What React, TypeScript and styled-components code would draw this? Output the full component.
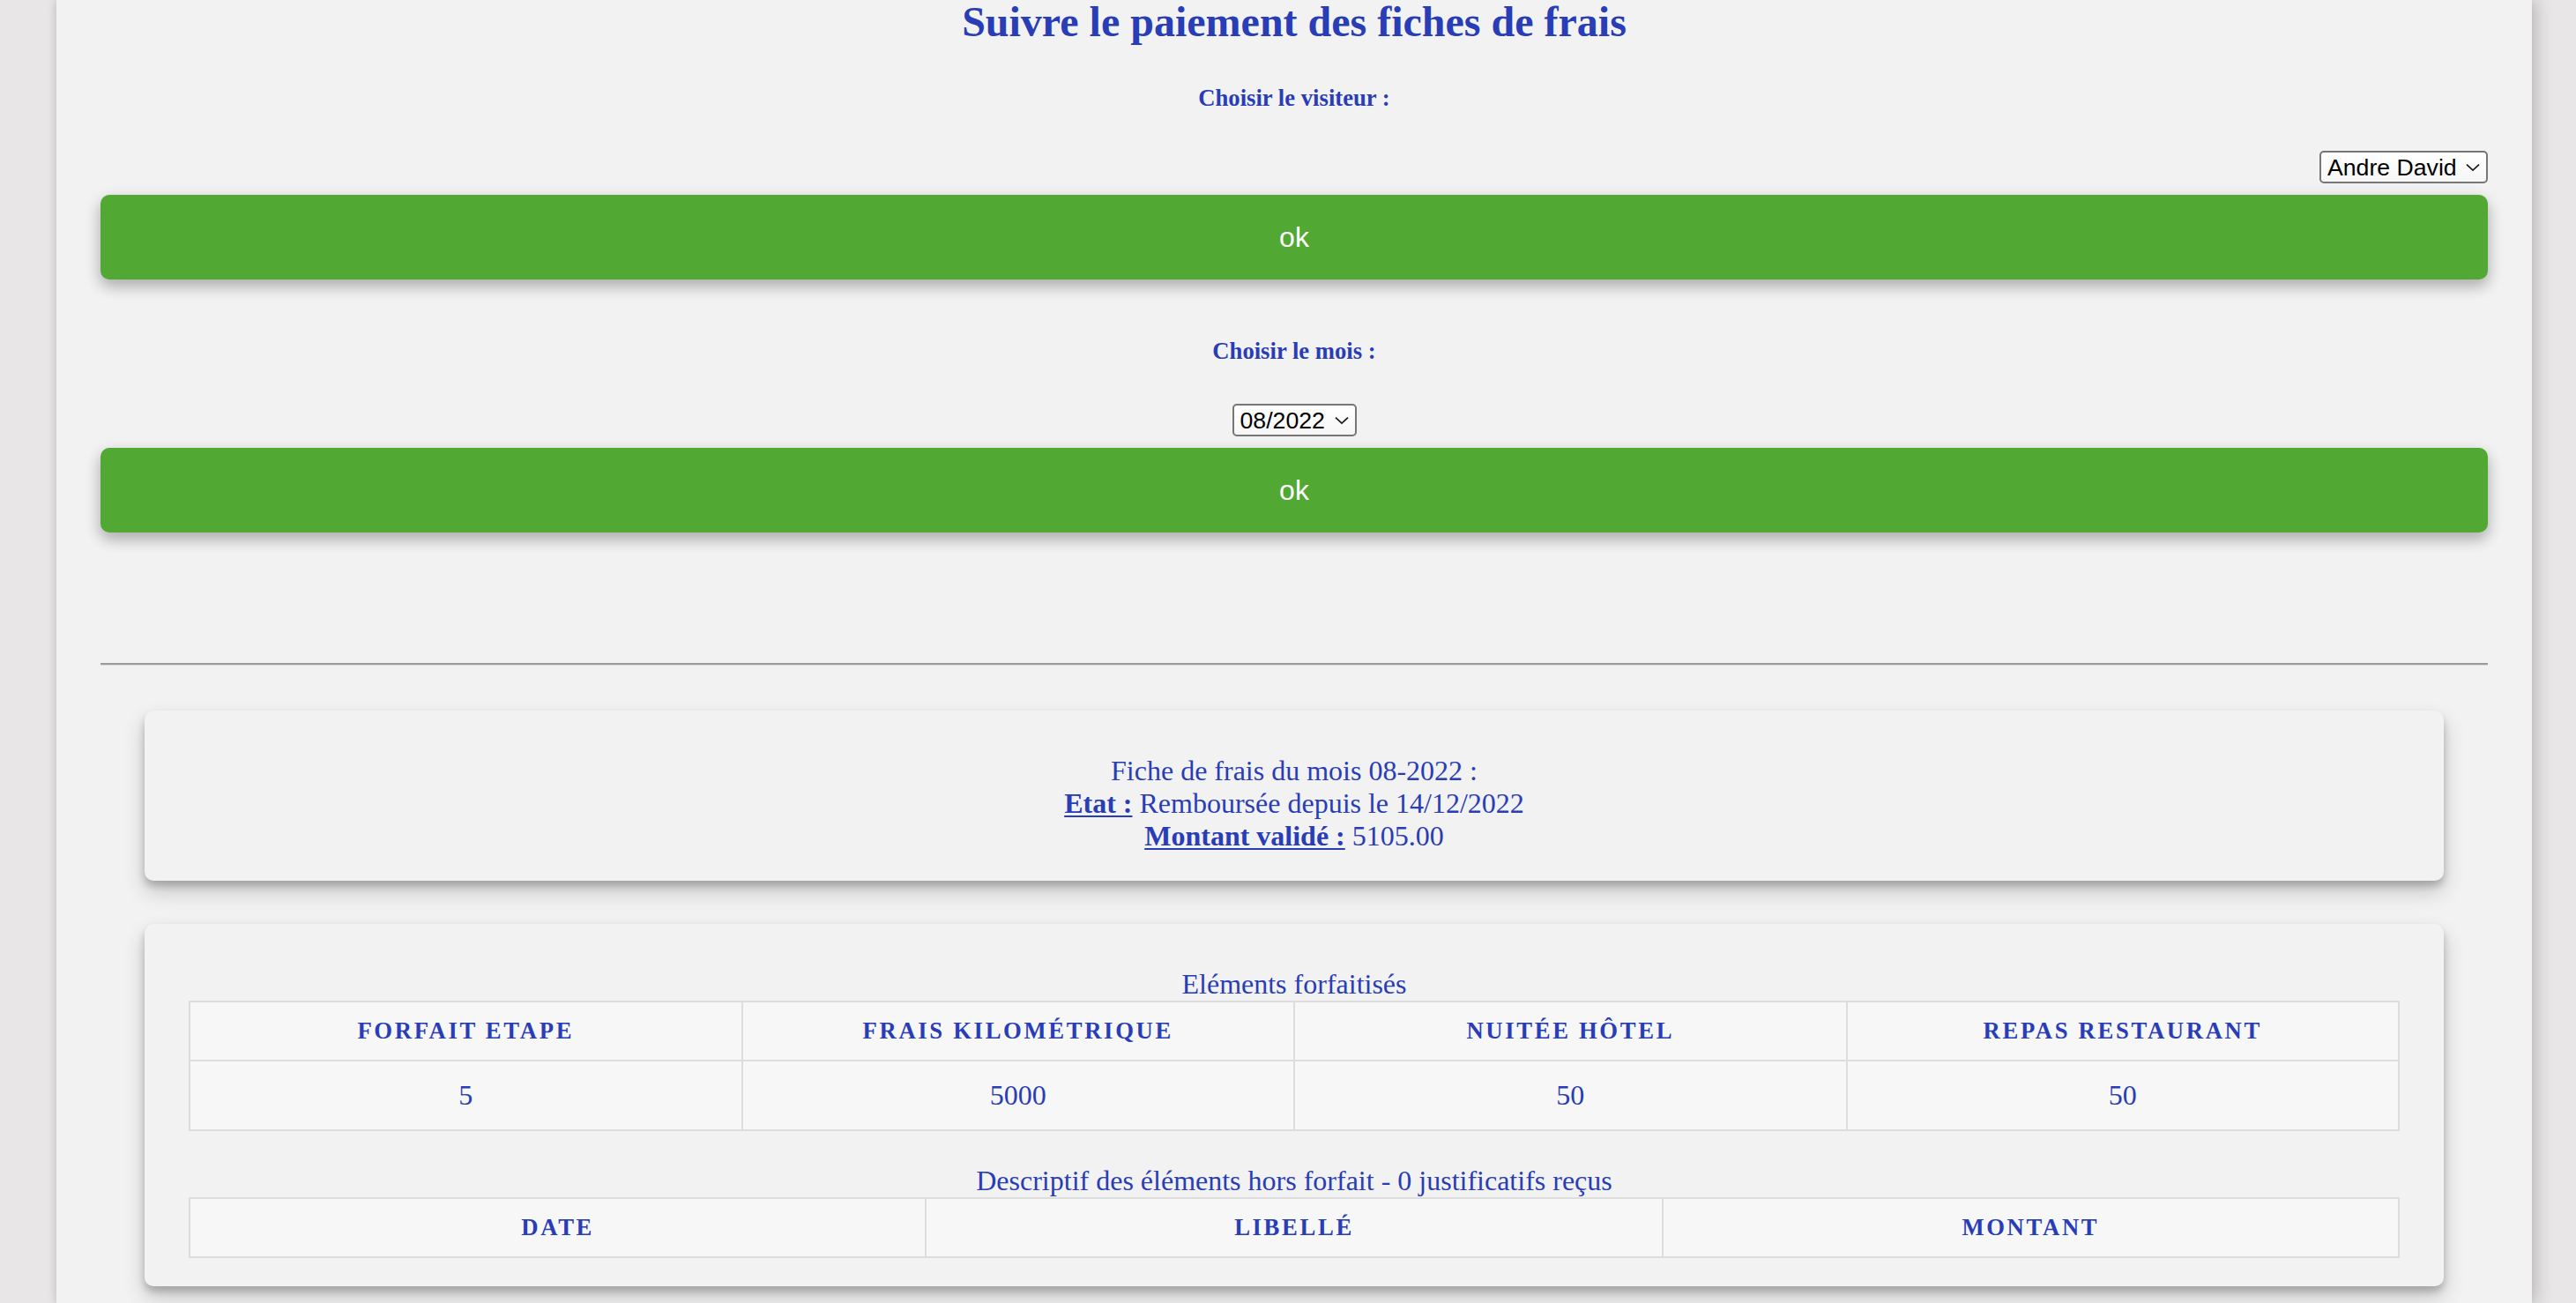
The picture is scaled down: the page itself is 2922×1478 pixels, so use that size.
import React from 'react';
import styled, { createGlobalStyle } from 'styled-components';

const GlobalStyle = createGlobalStyle`
  html, body {
    margin: 0;
    padding: 0;
    background: #e8e6e7;
    overflow: hidden;
  }
  body {
    font-family: "Liberation Serif", "Times New Roman", serif;
  }
`;

const Page = styled.div`
  min-height: 100vh;
  background: #e8e6e7;
  display: flex;
  padding-left: 64px;
  box-sizing: border-box;
`;

const Main = styled.main`
  width: 2808px;
  min-height: 1478px;
  box-sizing: border-box;
  padding: 0 50px 20px;
  background: #f2f2f2;
  color: #293db6;
  box-shadow: 6px 0 18px rgba(0, 0, 0, 0.18), -2px 0 8px rgba(0, 0, 0, 0.08);
`;

const Title = styled.h1`
  margin: -3px 0 0;
  font-size: 48px;
  line-height: 55px;
  font-weight: bold;
  text-align: center;
`;

const Label = styled.label<{ $gap: number }>`
  display: block;
  margin-top: ${p => p.$gap}px;
  font-size: 26.67px;
  line-height: 31px;
  font-weight: bold;
  text-align: center;
`;

const SelectRow = styled.div<{ $align: 'flex-end' | 'center' }>`
  display: flex;
  justify-content: ${p => p.$align};
  margin-top: 44px;
`;

const SelectWrap = styled.span`
  position: relative;
  display: inline-flex;
`;

const Select = styled.select`
  appearance: none;
  -webkit-appearance: none;
  height: 37px;
  box-sizing: border-box;
  margin: 0;
  border: 2px solid #767676;
  border-radius: 5px;
  background: linear-gradient(#ffffff, #f6f6f6);
  font-family: "Liberation Sans", Arial, sans-serif;
  font-size: 26.67px;
  color: #000;
  padding: 0 33px 0 7px;
  outline: none;
`;

const Chevron = styled.svg`
  position: absolute;
  right: 9px;
  top: 50%;
  width: 16px;
  height: 9px;
  transform: translateY(-50%);
  pointer-events: none;
`;

const OkButton = styled.button`
  display: block;
  width: 100%;
  height: 96px;
  margin-top: 13px;
  border: none;
  border-radius: 10px;
  background: #51a832;
  color: #ffffff;
  font-family: "Liberation Sans", Arial, sans-serif;
  font-size: 32px;
  cursor: pointer;
  box-shadow: 0 8px 16px 0 rgba(0, 0, 0, 0.2), 0 6px 20px 0 rgba(0, 0, 0, 0.12);
`;

const Rule = styled.hr`
  margin: 148px 0 0;
  height: 0;
  border: none;
  border-top: 2px solid #9b9b9b;
  border-bottom: 1px solid #dcdcdc;
`;

const Card = styled.section<{ $gap: number }>`
  margin: ${p => p.$gap}px 50px 0;
  padding: 50px 50px 32px;
  background: #f2f2f2;
  border-radius: 10px;
  box-shadow: 0 12px 24px rgba(0, 0, 0, 0.19), 0 6px 8px rgba(0, 0, 0, 0.2);
`;

const Summary = styled.div`
  font-size: 32px;
  line-height: 37px;
  text-align: center;
`;

const Key = styled.strong`
  text-decoration: underline;
  text-decoration-thickness: 2px;
  text-underline-offset: 3px;
`;

const Caption = styled.div<{ $gap: number }>`
  margin-top: ${p => p.$gap}px;
  font-size: 32px;
  line-height: 37px;
  text-align: center;
`;

const Table = styled.table`
  width: 100%;
  table-layout: fixed;
  border-collapse: collapse;
  border: 2px solid #dddddd;
`;

const Th = styled.th`
  padding: 17px 10px;
  background: #f7f7f7;
  border: 2px solid #dddddd;
  font-size: 26.67px;
  line-height: 31px;
  font-weight: bold;
  letter-spacing: 0.1em;
  text-transform: uppercase;
  text-align: center;
`;

const Td = styled.td`
  padding: 20px 10px;
  background: #f7f7f7;
  border: 2px solid #dddddd;
  font-size: 32px;
  line-height: 37px;
  text-align: center;
`;

function Dropdown({ value }: { value: string }) {
  return (
    <SelectWrap>
      <Select defaultValue={value}>
        <option value={value}>{value}</option>
      </Select>
      <Chevron viewBox="0 0 16 9">
        <path d="M1 1.2 L8 7.6 L15 1.2" fill="none" stroke="#1a1a1a" strokeWidth="1.7" />
      </Chevron>
    </SelectWrap>
  );
}

const forfaits = [
  { label: 'Forfait Etape', qty: '5' },
  { label: 'Frais Kilométrique', qty: '5000' },
  { label: 'Nuitée Hôtel', qty: '50' },
  { label: 'Repas Restaurant', qty: '50' },
];

export default function App() {
  return (
    <>
      <GlobalStyle />
      <Page>
        <Main>
          <Title>Suivre le paiement des fiches de frais</Title>

          <Label $gap={44}>Choisir le visiteur :</Label>
          <SelectRow $align="flex-end">
            <Dropdown value="Andre David" />
          </SelectRow>
          <OkButton>ok</OkButton>

          <Label $gap={66}>Choisir le mois :</Label>
          <SelectRow $align="center">
            <Dropdown value="08/2022" />
          </SelectRow>
          <OkButton>ok</OkButton>

          <Rule />

          <Card $gap={51}>
            <Summary>
              Fiche de frais du mois 08-2022 :<br />
              <Key>Etat :</Key> Remboursée depuis le 14/12/2022<br />
              <Key>Montant validé :</Key> 5105.00
            </Summary>
          </Card>

          <Card $gap={49}>
            <Caption $gap={0}>Eléments forfaitisés</Caption>
            <Table>
              <thead>
                <tr>
                  {forfaits.map(f => (
                    <Th key={f.label}>{f.label}</Th>
                  ))}
                </tr>
              </thead>
              <tbody>
                <tr>
                  {forfaits.map(f => (
                    <Td key={f.label}>{f.qty}</Td>
                  ))}
                </tr>
              </tbody>
            </Table>

            <Caption $gap={38}>Descriptif des éléments hors forfait - 0 justificatifs reçus</Caption>
            <Table>
              <thead>
                <tr>
                  <Th>Date</Th>
                  <Th>Libellé</Th>
                  <Th>Montant</Th>
                </tr>
              </thead>
            </Table>
          </Card>
        </Main>
      </Page>
    </>
  );
}
